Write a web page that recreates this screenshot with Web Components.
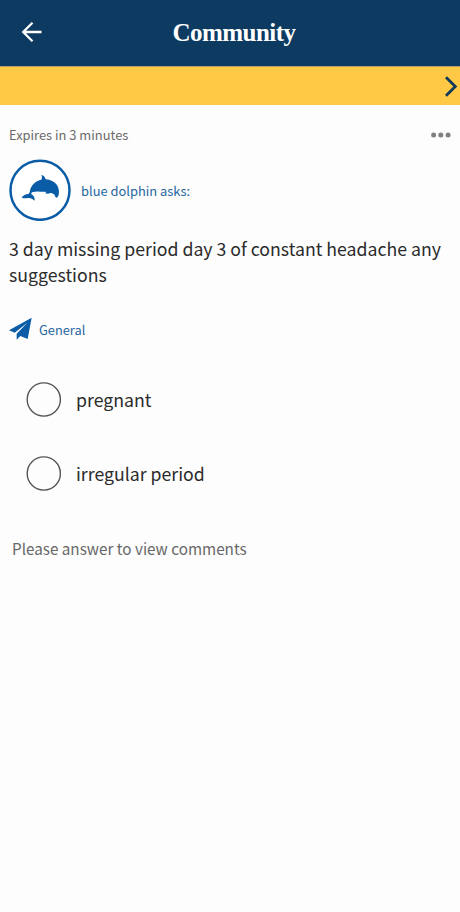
<!DOCTYPE html>
<html lang="en">
<head>
<meta charset="utf-8">
<meta name="viewport" content="width=device-width, initial-scale=1">
<title>Community</title>
<style>
    body {
        margin: 0;
        background: #fdfdfd;
        font-family: 'Noto Sans CJK SC', 'Noto Sans', sans-serif;
        color: #2b2b2b;
    }
</style>
</head>
<body>
<community-page>
    <app-header>Community</app-header>
    <promo-banner></promo-banner>
    <question-card expires="Expires in 3 minutes" author="blue dolphin asks:" category="General">
        3 day missing period day 3 of constant headache any suggestions
    </question-card>
    <poll-option>pregnant</poll-option>
    <poll-option>irregular period</poll-option>
    <comments-note>Please answer to view comments</comments-note>
</community-page>

<script>
// Attach an open shadow root and fill it with the given markup
function render(host, html) {
    const template = document.createElement('template');
    template.innerHTML = html;
    host.attachShadow({ mode: 'open' }).appendChild(template.content.cloneNode(true));
}

class CommunityPage extends HTMLElement {
    constructor() {
        super();
        render(this, `
            <style>
                :host {
                    display: flex;
                    flex-direction: column;
                    min-height: 100vh;
                    overflow: hidden;
                }
            </style>
            <slot></slot>
        `);
    }
}

class AppHeader extends HTMLElement {
    constructor() {
        super();
        render(this, `
            <style>
                :host {
                    display: grid;
                    grid-template-columns: 64px 1fr 56px;
                    align-items: center;
                    box-sizing: border-box;
                    height: 66px;
                    background: #0c3a61;
                    color: #fff;
                }
                button {
                    display: flex;
                    padding: 0 0 3px 21px;
                    border: 0;
                    background: none;
                    color: inherit;
                }
                h1 {
                    margin: 0;
                    font: bold 25px/32px 'Liberation Serif', serif;
                    letter-spacing: -0.55px;
                    text-align: center;
                }
            </style>
            <button aria-label="Back">
                <svg width="22" height="22" viewBox="0 0 22 22" fill="none" stroke="currentColor" stroke-width="2.3">
                    <path d="M20.5 11H2.5M11.5 1.8L2.2 11l9.3 9.2"/>
                </svg>
            </button>
            <h1><slot></slot></h1>
        `);
    }
}

class PromoBanner extends HTMLElement {
    constructor() {
        super();
        render(this, `
            <style>
                :host {
                    display: flex;
                    align-items: center;
                    justify-content: flex-end;
                    box-sizing: border-box;
                    height: 39px;
                    padding-right: 2px;
                    border-top: 1px solid #b29e66;
                    background: #ffc845;
                    color: #10395a;
                }
            </style>
            <svg width="14" height="22" viewBox="0 0 14 22" fill="none" stroke="currentColor" stroke-width="2.8">
                <path d="M2 2.3L11.3 11.5 2 20.7"/>
            </svg>
        `);
    }
}

class UserAvatar extends HTMLElement {
    constructor() {
        super();
        render(this, `
            <style>
                :host {
                    display: block;
                    width: 62px;
                    height: 62px;
                    color: #0a5ca6;
                }
                svg {
                    display: block;
                }
            </style>
            <svg width="62" height="62" viewBox="0 -1 186 186">
                <circle cx="93" cy="93" r="88.5" fill="#fff" stroke="currentColor" stroke-width="7.5"/>
                <path fill="currentColor" d="M97 46C104 48 109 54 110 60C124 61 137 67 144 77C150 86 151 98 149 106C148 110 145 115 141 115C138 112 138 108 135 105C131 102 127 101 123 101C121 104 115 104 108 102C111 100 112 98 109 97C98 98 83 94 72 98C68 99 66 102 67 105C74 108 78 116 77 124C71 119 65 115 57 116C51 118 45 117 38 115C43 108 50 104 58 104C61 102 62 99 63 94C66 78 79 64 97 61C100 55 99 50 97 46Z"/>
            </svg>
        `);
    }
}

class QuestionCard extends HTMLElement {
    constructor() {
        super();
        render(this, `
            <style>
                :host {
                    display: block;
                    padding: 19px 9px 0;
                }
                .meta,
                .author,
                .category {
                    display: flex;
                    align-items: center;
                }
                .meta {
                    justify-content: space-between;
                    height: 20px;
                    color: #6a6a6a;
                    font-size: 12.9px;
                }
                .meta svg {
                    margin-top: 2px;
                }
                .author {
                    gap: 10px;
                    margin-top: 15px;
                    color: #2767a0;
                    font-size: 12.9px;
                }
                p {
                    margin: 14px 0 0;
                    font-size: 17.7px;
                    line-height: 26px;
                }
                .category {
                    gap: 7px;
                    height: 24px;
                    margin-top: 30px;
                    color: #2767a0;
                    font-size: 12.8px;
                }
            </style>
            <div class="meta">
                <span class="expires"></span>
                <svg width="20" height="6" viewBox="0 0 20 6" fill="#808080">
                    <circle cx="2.6" cy="3" r="2.5"/>
                    <circle cx="9.8" cy="3" r="2.5"/>
                    <circle cx="17.1" cy="3" r="2.5"/>
                </svg>
            </div>
            <div class="author">
                <user-avatar></user-avatar>
                <span class="name"></span>
            </div>
            <p><slot></slot></p>
            <div class="category">
                <svg width="23" height="24" viewBox="0 0 69 72" fill="#0a5ca6">
                    <path d="M68 2L0 40L17 47L55 17L23 50V68L34 57L56 66Z"/>
                </svg>
                <span class="topic"></span>
            </div>
        `);
    }

    connectedCallback() {
        this.shadowRoot.querySelector('.expires').textContent = this.getAttribute('expires');
        this.shadowRoot.querySelector('.name').textContent = this.getAttribute('author');
        this.shadowRoot.querySelector('.topic').textContent = this.getAttribute('category');
    }
}

class PollOption extends HTMLElement {
    constructor() {
        super();
        render(this, `
            <style>
                :host {
                    display: flex;
                    align-items: center;
                    gap: 15px;
                    height: 35px;
                    margin: 0 26px 39px;
                    font-size: 17.7px;
                }
                :host(:first-of-type) {
                    margin-top: 41px;
                }
                .label {
                    margin-bottom: 2px;
                }
            </style>
            <svg width="35" height="35" viewBox="0 0 35 35" fill="none" stroke="#555" stroke-width="1.4">
                <circle cx="17.8" cy="17.5" r="16.6"/>
            </svg>
            <span class="label"><slot></slot></span>
        `);
    }
}

class CommentsNote extends HTMLElement {
    constructor() {
        super();
        render(this, `
            <style>
                :host {
                    display: block;
                    margin: 6px 12px 0;
                    color: #686868;
                    font-size: 15.25px;
                    line-height: 24px;
                }
            </style>
            <slot></slot>
        `);
    }
}

customElements.define('community-page', CommunityPage);
customElements.define('app-header', AppHeader);
customElements.define('promo-banner', PromoBanner);
customElements.define('user-avatar', UserAvatar);
customElements.define('question-card', QuestionCard);
customElements.define('poll-option', PollOption);
customElements.define('comments-note', CommentsNote);
</script>
</body>
</html>
